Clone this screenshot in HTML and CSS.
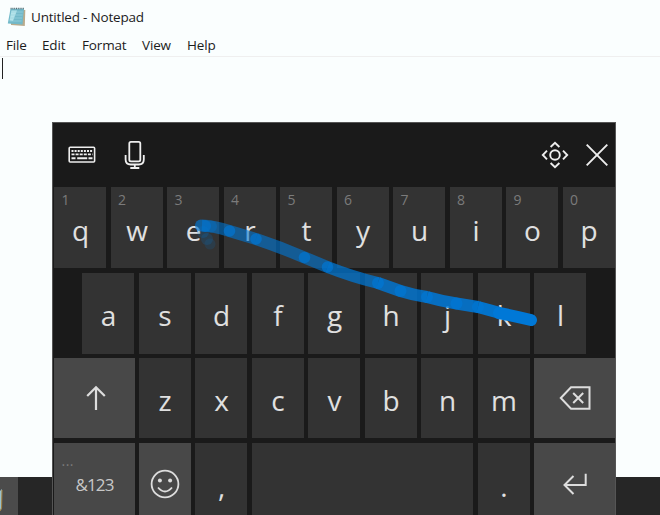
FILE: index.html
```
<!DOCTYPE html>
<html lang="en">
<head>
<meta charset="utf-8">
<title>Untitled - Notepad</title>
<link rel="stylesheet" href="styles.css">
</head>
<body>
<div class="desktop">
  <main class="notepad">
    <header class="titlebar">
      <svg class="app-icon" width="20" height="20" viewBox="0 0 20 20">
        <path d="M4 2.5 18.3 3 17.8 19 4 18Z" fill="#b9ab8c"/>
        <path d="M3.5 1.8 17 1.8 15.5 17.5 .8 16.5Z" fill="#72b9c9"/>
        <path d="M4.5 3.5 10 3.5 6 14 2.5 13.5Z" fill="#b4e3ea"/>
        <path d="M3.8 5h12M3.5 8H15.500M3 11h12M2.500 14h12" stroke="#9bd4df" stroke-width=".7"/>
        <path d="M3.6 1.5H17" stroke="#536d73" stroke-width="1.6" stroke-dasharray="1 .8"/>
      </svg>
      <span class="title">Untitled - Notepad</span>
    </header>
    <nav class="menu"><span>File</span><span>Edit</span><span>Format</span><span>View</span><span>Help</span></nav>
    <div class="editor"><div class="caret"></div></div>
  </main>
  <footer class="taskbar"><div class="task"><svg width="4" height="24" viewBox="0 0 4 24"><path d="M0 2 2 0 1.500 20 0 22Z" fill="#9bc3cb"/><path d="M2 1 1.600 19 0 22" stroke="#a8813d" fill="none"/></svg></div></footer>

  <section class="keyboard">
    <div class="toolbar">
      <svg class="kb" width="28" height="18" viewBox="0 0 28 18" fill="none" stroke="#eee">
        <rect x="1.200" y="1.2" width="25.4" height="14.8" rx="1" stroke-width="1.6"/>
        <path d="M3.5 5h21" stroke-width="2" stroke-dasharray="2 1.1"/>
        <path d="M3.5 8.4h21" stroke-width="1.7" stroke-dasharray="3 1.1"/>
        <path d="M3.5 12.3h4M9.2 12.3h10M20.5 12.3h4" stroke-width="2"/>
      </svg>
      <svg class="mic" width="22" height="30" viewBox="0 0 22 30" fill="none" stroke="#eee" stroke-width="1.8">
        <rect x="5.3" y="1.8" width="11" height="19.5" rx="1.6"/>
        <path d="M1.6 15v4.5q0 5 5 5h8.2q5 0 5-5V15M10.8 24.5v3.5M6.3 28h9"/>
      </svg>
      <span class="spacer"></span>
      <svg class="dock" width="28" height="28" viewBox="0 0 28 28" fill="none" stroke="#eee" stroke-width="1.9">
        <circle cx="14" cy="14" r="4.8"/>
        <path d="M9.6 6 14 1.8 18.4 6M9.6 22 14 26.2 18.4 22M6 9.6 1.8 14 6 18.4M22 9.6 26.2 14 22 18.4"/>
      </svg>
      <svg class="close" width="22" height="22" viewBox="0 0 22 22"><path d="M.7.7 21.3 21.3M21.3.7.7 21.3" stroke="#eee" stroke-width="1.9"/></svg>
    </div>
    <div class="row">
      <div class="key"><small>1</small><b>q</b></div><div class="key"><small>2</small><b>w</b></div><div class="key"><small>3</small><b>e</b></div><div class="key"><small>4</small><b>r</b></div><div class="key"><small>5</small><b>t</b></div><div class="key"><small>6</small><b>y</b></div><div class="key"><small>7</small><b>u</b></div><div class="key"><small>8</small><b>i</b></div><div class="key"><small>9</small><b>o</b></div><div class="key"><small>0</small><b>p</b></div>
    </div>
    <div class="row home">
      <div class="key"><b>a</b></div><div class="key"><b>s</b></div><div class="key"><b>d</b></div><div class="key"><b>f</b></div><div class="key"><b>g</b></div><div class="key"><b>h</b></div><div class="key"><b>j</b></div><div class="key"><b>k</b></div><div class="key"><b>l</b></div>
    </div>
    <div class="row third">
      <div class="key wide left"><svg width="20" height="26" viewBox="0 0 20 26" fill="none" stroke="#ddd" stroke-width="2.2"><path d="M10 25V2M1.2 11 10 2.2 18.8 11"/></svg></div>
      <div class="key"><b>z</b></div><div class="key"><b>x</b></div><div class="key"><b>c</b></div><div class="key"><b>v</b></div><div class="key"><b>b</b></div><div class="key"><b>n</b></div><div class="key"><b>m</b></div>
      <div class="key wide"><svg width="32" height="24" viewBox="0 0 32 24" fill="none" stroke="#ddd" stroke-width="2"><path d="M1.8 12 12 1.2H30.5V22.8H12ZM14.2 7l10 10M24.2 7l-10 10"/></svg></div>
    </div>
    <div class="row bottom">
      <div class="key wide left symbols"><small>...</small><span>&amp;123</span></div>
      <div class="key light emoji"><svg width="30" height="30" viewBox="0 0 30 30" fill="none" stroke="#ddd" stroke-width="1.8"><circle cx="15" cy="15" r="13.4"/><path d="M8 18.5q7 8 14 0"/><circle cx="9.9" cy="11.5" r="2" fill="#ddd" stroke="none"/><circle cx="20.1" cy="11.5" r="2" fill="#ddd" stroke="none"/></svg></div>
      <div class="key"><b>,</b></div>
      <div class="key space"></div>
      <div class="key"><b>.</b></div>
      <div class="key wide enter"><svg width="24" height="22" viewBox="0 0 24 22" fill="none" stroke="#ddd" stroke-width="2"><path d="M22.7.8V12H1.8M10.5 3 1.5 12 10.5 21"/></svg></div>
    </div>
    <svg class="trail" width="564" height="393" viewBox="52 122 564 393" fill="none" stroke="#0078d7" stroke-width="12">
      <g fill="#0078d7" stroke="none">
        <circle cx="210" cy="244" r="5.5" opacity=".14"/><circle cx="207" cy="239" r="6" opacity=".18"/><circle cx="203" cy="232" r="6" opacity=".2"/>
      </g>
      <path d="M202 225.5Q214 226 229.5 231L256 239" opacity=".58"/>
      <path d="M256 239Q280 247 304.5 257.5L327.5 267" opacity=".6"/>
      <path d="M327.5 267Q353 277 378 283" opacity=".72"/>
      <path d="M378 283 400.5 291Q413 295 427 297" opacity=".8"/>
      <path d="M427 297Q441 301 456.5 303.5L478 307" opacity=".86"/>
      <path d="M478 307 500 313" opacity=".93"/>
      <path d="M499 313Q515 316 531 320" stroke-linecap="round"/>
      <g fill="#0078d7" stroke="none" opacity=".65">
        <circle cx="201" cy="225.5" r="6"/><circle cx="205" cy="226" r="6"/><circle cx="211" cy="226.5" r="6" opacity=".5"/><circle cx="229.5" cy="231" r="5.8"/><circle cx="256" cy="239" r="5.8"/><circle cx="304.5" cy="257.5" r="5.8"/><circle cx="327.5" cy="267" r="5.8"/><circle cx="378" cy="283" r="6"/><circle cx="400.5" cy="291" r="6"/><circle cx="427" cy="297" r="6"/><circle cx="456.5" cy="303.5" r="6"/><circle cx="478" cy="307" r="6"/>
      </g>
    </svg>
  </section>
</div>
</body>
</html>
```
FILE: styles.css
```
* { box-sizing: border-box; }
body { margin: 0; overflow: hidden; font-family: "Open Sans", "Noto Sans", sans-serif; }
.desktop { position: relative; width: 660px; height: 515px; display: flex; flex-direction: column; overflow: hidden; background: #262626; }
.notepad { height: 477px; background: #fafefe; color: #1c1c1c; }
.titlebar { height: 33px; display: flex; align-items: center; padding-left: 7px; }
.title { margin-left: 4px; font-size: 13.5px; letter-spacing: -.2px; white-space: nowrap; }
.menu { height: 24px; display: grid; grid-template-columns: 36px 40px 60px 45px 40px; padding-left: 6px; border-bottom: 1px solid #efefef; font-size: 13.5px; line-height: 25px; }
.menu span { letter-spacing: -.15px; }
.editor { padding: 1px 0 0 2px; }
.caret { width: 1px; height: 21px; background: #222; }
.taskbar { height: 38px; background: #262626; }
.task { width: 18px; height: 38px; padding-top: 12px; background: #4b4b4b; }
.task svg { display: block; }

.keyboard { position: absolute; left: 52px; top: 122px; width: 564px; height: 393px; overflow: hidden; background: #1a1a1a; border: 0 solid #555; border-width: 1px 1px 0; color: #e0e0e0; }
.toolbar { height: 64px; display: flex; align-items: center; padding: 0 7px 0 15px; }
.mic { margin-left: 28px; }
.spacer { flex: 1; }
.close { margin-left: 17px; }
.row { display: flex; gap: 4.5px; height: 81px; margin: 0 0 4.5px 1px; }
.key { position: relative; flex: 0 0 52px; height: 100%; background: #333; display: flex; flex-direction: column; align-items: center; }
.key b { display: block; margin: 24px 0 0 1px; font-size: 28px; line-height: 38px; font-weight: 400; }
.key small { position: absolute; left: 7.5px; top: 4px; font-size: 14px; line-height: 17px; color: #7b7b7b; }
.home { margin-left: 29px; }
.home b, .third b { margin-top: 23px; }
.third { height: 80px; }
.wide, .light { background: #484848; }
.wide { flex-basis: 81px; }
.left { margin-right: -1px; }
.third .wide { justify-content: center; }
.third .left svg { margin-left: 2px; }
.bottom { height: 80px; }
.symbols span { margin-top: 29px; font-size: 17px; line-height: 25px; letter-spacing: -.9px; color: #c8c8c8; }
.key.symbols small { top: 9px; letter-spacing: .5px; }
.emoji { padding-top: 26px; }
.enter { padding-top: 30px; }
.space { flex-basis: 221.5px; }
.trail { position: absolute; left: -1px; top: -1px; }
```
